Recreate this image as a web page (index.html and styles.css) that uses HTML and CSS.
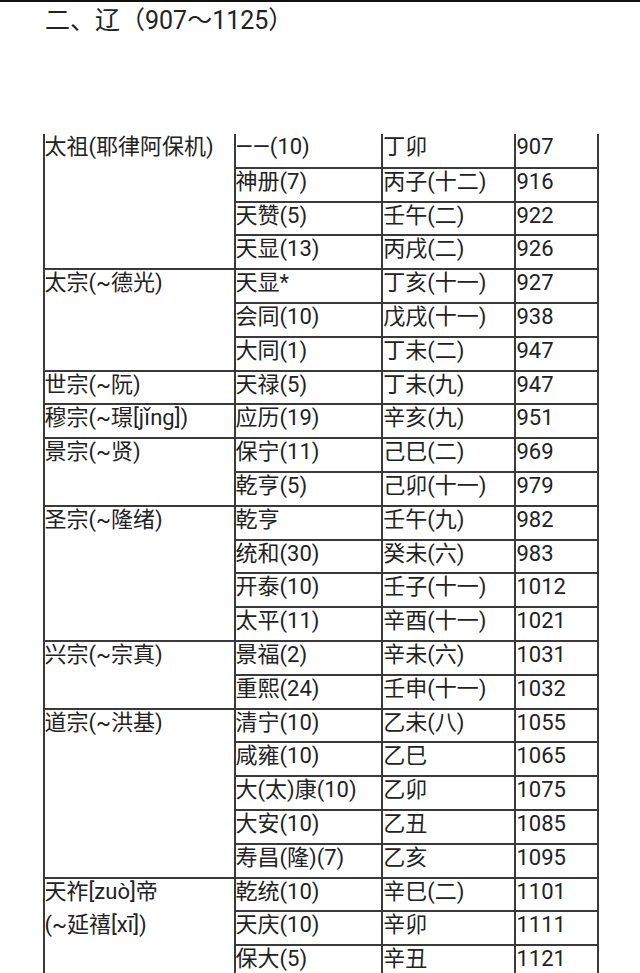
FILE: index.html
```html
<!DOCTYPE html>
<html lang="zh-CN">
<head>
<meta charset="utf-8">
<title>辽</title>
<link rel="stylesheet" href="styles.css">
</head>
<body>
<h2 class="title">二、辽（907～1125）</h2>
<table class="reigns">
<colgroup><col class="c1"><col class="c2"><col class="c3"><col class="c4"></colgroup>
<tbody>
<tr><td rowspan="4">太祖(耶律阿保机)</td><td>——(10)</td><td>丁卯</td><td>907</td></tr>
<tr><td>神册(7)</td><td>丙子(十二)</td><td>916</td></tr>
<tr><td>天赞(5)</td><td>壬午(二)</td><td>922</td></tr>
<tr><td>天显(13)</td><td>丙戌(二)</td><td>926</td></tr>
<tr><td rowspan="3">太宗(~德光)</td><td>天显*</td><td>丁亥(十一)</td><td>927</td></tr>
<tr><td>会同(10)</td><td>戊戌(十一)</td><td>938</td></tr>
<tr><td>大同(1)</td><td>丁未(二)</td><td>947</td></tr>
<tr><td>世宗(~阮)</td><td>天禄(5)</td><td>丁未(九)</td><td>947</td></tr>
<tr><td>穆宗(~璟[jǐng])</td><td>应历(19)</td><td>辛亥(九)</td><td>951</td></tr>
<tr><td rowspan="2">景宗(~贤)</td><td>保宁(11)</td><td>己巳(二)</td><td>969</td></tr>
<tr><td>乾亨(5)</td><td>己卯(十一)</td><td>979</td></tr>
<tr><td rowspan="4">圣宗(~隆绪)</td><td>乾亨</td><td>壬午(九)</td><td>982</td></tr>
<tr><td>统和(30)</td><td>癸未(六)</td><td>983</td></tr>
<tr><td>开泰(10)</td><td>壬子(十一)</td><td>1012</td></tr>
<tr><td>太平(11)</td><td>辛酉(十一)</td><td>1021</td></tr>
<tr><td rowspan="2">兴宗(~宗真)</td><td>景福(2)</td><td>辛未(六)</td><td>1031</td></tr>
<tr><td>重熙(24)</td><td>壬申(十一)</td><td>1032</td></tr>
<tr><td rowspan="5">道宗(~洪基)</td><td>清宁(10)</td><td>乙未(八)</td><td>1055</td></tr>
<tr><td>咸雍(10)</td><td>乙巳</td><td>1065</td></tr>
<tr><td>大(太)康(10)</td><td>乙卯</td><td>1075</td></tr>
<tr><td>大安(10)</td><td>乙丑</td><td>1085</td></tr>
<tr><td>寿昌(隆)(7)</td><td>乙亥</td><td>1095</td></tr>
<tr><td rowspan="3"><div class="wrap">天祚[zuò]帝<br>(~延禧[xī])</div></td><td>乾统(10)</td><td>辛巳(二)</td><td>1101</td></tr>
<tr><td>天庆(10)</td><td>辛卯</td><td>1111</td></tr>
<tr><td>保大(5)</td><td>辛丑</td><td>1121</td></tr>
</tbody>
</table>
</body>
</html>
```

FILE: styles.css
```css
html, body {
  margin: 0;
  padding: 0;
  background: #ffffff;
}

body {
  font-family: Roboto, "Noto Sans CJK SC", sans-serif;
  color: #222222;
  border-top: 2px solid #111111;
}

.title {
  margin: 0;
  padding: 3px 0 0 45px;
  height: 36px;
  font-size: 25px;
  font-weight: normal;
  line-height: 32px;
  color: #222222;
}

.reigns {
  border-collapse: collapse;
  table-layout: fixed;
  width: 555px;
  margin: 93px 0 0 42.5px;
  font-size: 22px;
}

.c1 { width: 191px; }
.c2 { width: 147.7px; }
.c3 { width: 133.3px; }
.c4 { width: 83px; }

.reigns tr {
  height: 33.8px;
}

.reigns td {
  border: 2px solid #3a3a3a;
  padding: 0;
  vertical-align: top;
  line-height: 26px;
  white-space: nowrap;
}

.reigns tr:first-child td {
  border-top: 0;
}

.wrap {
  line-height: 33.8px;
  margin-top: -4px;
}
```
